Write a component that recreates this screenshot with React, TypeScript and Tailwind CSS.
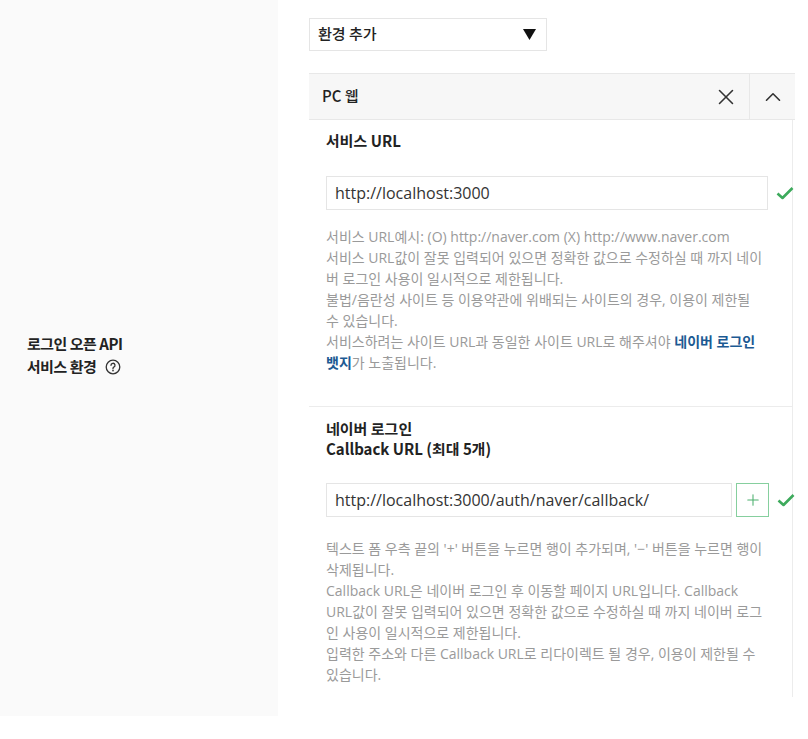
import { X, ChevronUp, Plus } from 'lucide-react'

const font = { fontFamily: '"Noto Sans KR", "Noto Sans CJK KR", "Noto Sans", sans-serif' }
const helpFont = { fontFamily: '"Open Sans", "Noto Sans CJK KR", sans-serif' }

function HelpIcon() {
  return (
    <svg width="16" height="16" viewBox="0 0 16 16" className="ml-[9px] inline-block" aria-hidden="true">
      <circle cx="8" cy="8" r="6.8" fill="none" stroke="#333" strokeWidth="1.3" />
      <path d="M6 6.3a2 2 0 1 1 2.8 1.8c-.6.3-.8.7-.8 1.3v.4" fill="none" stroke="#333" strokeWidth="1.3" strokeLinecap="round" />
      <circle cx="8" cy="11.6" r="0.85" fill="#333" />
    </svg>
  )
}

function CheckMark() {
  return (
    <svg width="18" height="14" viewBox="0 0 18 14" className="ml-[8px] shrink-0" aria-hidden="true">
      <path d="M1.5 7.5l5 4.5L16.5 2" fill="none" stroke="#3daa5c" strokeWidth="2.6" strokeLinejoin="round" />
    </svg>
  )
}

export default function App() {
  return (
    <div className="flex min-h-[739px] w-[808px] overflow-hidden bg-white text-[#333]" style={font}>
      <aside className="flex h-[716px] w-[278px] shrink-0 items-center bg-[#fafafa] pl-[27px]">
        <div className="mb-[6px] text-[15px] font-bold leading-[23px] tracking-[-0.5px] text-[#222]">
          <div>로그인 오픈 API</div>
          <div className="flex items-center">
            서비스 환경
            <HelpIcon />
          </div>
        </div>
      </aside>

      <main className="flex-1 pl-[31px] pt-[18px]">
        <button className="flex h-[33px] w-[238px] items-center justify-between border border-[#e5e5e5] bg-white pl-[8px] pr-[10px] text-[15px] font-medium text-[#222]">
          <span>환경 추가</span>
          <svg width="13" height="11" viewBox="0 0 13 11" aria-hidden="true">
            <path d="M0 0h13L6.5 11z" fill="#111" />
          </svg>
        </button>

        <section className="mt-[22px] w-[486px]">
          <div className="flex h-[47px] items-center border-y border-[#e8e8e8] bg-[#f7f7f7]">
            <span className="flex-1 pl-[13px] text-[15px] font-medium text-[#222]">PC 웹</span>
            <button className="flex h-full w-[46px] items-center justify-center text-[#333]" aria-label="삭제">
              <X size={26} strokeWidth={1.4} />
            </button>
            <button className="flex h-full w-[46px] items-center justify-center border-l border-[#e8e8e8] text-[#333]" aria-label="접기">
              <ChevronUp size={26} strokeWidth={1.5} />
            </button>
          </div>

          <div className="mr-[2px] border-r border-[#ececec]">
            <div className="border-b border-[#ececec] pb-[33px] pl-[17px] pt-[10px]">
              <h3 className="text-[15px] font-bold leading-[22px] text-[#222]">서비스 URL</h3>
              <div className="mt-[24px] flex items-center">
                <input
                  readOnly
                  value="http://localhost:3000"
                  className="h-[34px] w-[442px] shrink-0 border border-[#e5e5e5] bg-white px-[8px] text-[16px] text-[#333] outline-none"
                  style={{ fontFamily: '"Open Sans", "Noto Sans", sans-serif' }}
                />
                <CheckMark />
              </div>
              <p className="mt-[16px] w-[438px] text-[14px] leading-[21px] text-[#9a9a9a]" style={helpFont}>
                서비스 URL예시: (O) http://naver.com (X) http://www.naver.com
                <br />
                서비스 URL값이 잘못 입력되어 있으면 정확한 값으로 수정하실 때 까지 네이버 로그인 사용이 일시적으로 제한됩니다.
                <br />
                불법/음란성 사이트 등 이용약관에 위배되는 사이트의 경우, 이용이 제한될 수 있습니다.
                <br />
                서비스하려는 사이트 URL과 동일한 사이트 URL로 해주셔야 <b className="text-[#1c5a93]">네이버 로그인 뱃지</b>가 노출됩니다.
              </p>
            </div>

            <div className="pb-[12px] pl-[17px] pt-[12px]">
              <h3 className="text-[15px] font-bold leading-[20px] text-[#222]">
                네이버 로그인
                <br />
                Callback URL (최대 5개)
              </h3>
              <div className="mt-[24px] flex items-center">
                <input
                  readOnly
                  value="http://localhost:3000/auth/naver/callback/"
                  className="h-[34px] w-[406px] shrink-0 border border-[#e5e5e5] bg-white px-[8px] text-[16px] text-[#333] outline-none"
                  style={{ fontFamily: '"Open Sans", "Noto Sans", sans-serif' }}
                />
                <button className="ml-[4px] flex h-[34px] w-[33px] shrink-0 items-center justify-center border border-[#86cf9e] text-[#4cb06e]" aria-label="추가">
                  <Plus size={18} strokeWidth={1.4} />
                </button>
                <CheckMark />
              </div>
              <p className="mt-[21px] w-[438px] text-[14px] leading-[21px] text-[#9a9a9a]" style={helpFont}>
                텍스트 폼 우측 끝의 '+' 버튼을 누르면 행이 추가되며, '−' 버튼을 누르면 행이 삭제됩니다.
                <br />
                Callback URL은 네이버 로그인 후 이동할 페이지 URL입니다. Callback URL값이 잘못 입력되어 있으면 정확한 값으로 수정하실 때 까지 네이버 로그인 사용이 일시적으로 제한됩니다.
                <br />
                입력한 주소와 다른 Callback URL로 리다이렉트 될 경우, 이용이 제한될 수 있습니다.
              </p>
            </div>
          </div>
        </section>
      </main>
    </div>
  )
}
